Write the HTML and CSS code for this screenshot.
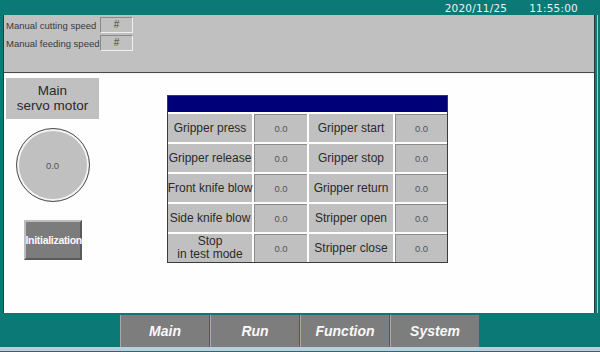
FILE: index.html
```html
<!DOCTYPE html>
<html lang="en">
<head>
  <meta charset="UTF-8">
  <title>Main servo motor</title>
  <link rel="stylesheet" href="styles.css">
</head>
<body>
  <div class="screen">
    <div class="topbar">
      <span class="date">2020/11/25</span>
      <span class="time">11:55:00</span>
    </div>

    <div class="frame">
      <div class="settings">
        <div class="setting-row">
          <span class="setting-label">Manual cutting speed</span>
          <span class="setting-box">#</span>
        </div>
        <div class="setting-row">
          <span class="setting-label">Manual feeding speed</span>
          <span class="setting-box">#</span>
        </div>
      </div>

      <div class="content">
        <div class="servo">
          <div class="servo-title">Main<br>servo motor</div>
          <div class="gauge">0.0</div>
          <button class="init-btn">Initialization</button>
        </div>

        <div class="status-table">
          <div class="status-head"></div>
          <div class="status-grid">
            <div class="cell label">Gripper press</div>
            <div class="cell value">0.0</div>
            <div class="cell label">Gripper start</div>
            <div class="cell value">0.0</div>

            <div class="cell label">Gripper release</div>
            <div class="cell value">0.0</div>
            <div class="cell label">Gripper stop</div>
            <div class="cell value">0.0</div>

            <div class="cell label">Front knife blow</div>
            <div class="cell value">0.0</div>
            <div class="cell label">Gripper return</div>
            <div class="cell value">0.0</div>

            <div class="cell label">Side knife blow</div>
            <div class="cell value">0.0</div>
            <div class="cell label">Stripper open</div>
            <div class="cell value">0.0</div>

            <div class="cell label small">Stop<br>in test mode</div>
            <div class="cell value">0.0</div>
            <div class="cell label">Stripper close</div>
            <div class="cell value">0.0</div>
          </div>
        </div>
      </div>
    </div>

    <div class="nav">
      <button class="nav-btn">Main</button>
      <button class="nav-btn">Run</button>
      <button class="nav-btn">Function</button>
      <button class="nav-btn">System</button>
    </div>

    <div class="taskbar"></div>
  </div>
</body>
</html>
```

FILE: styles.css
```css
body {
  margin: 0;
  padding: 0;
  background-color: #0b7976;
  font-family: "Liberation Sans", Arial, sans-serif;
}
.screen {
  width: 600px;
  height: 352px;
  display: flex;
  flex-direction: column;
  overflow: hidden;
}
.topbar {
  height: 15px;
  display: flex;
  justify-content: flex-end;
  align-items: center;
  gap: 22px;
  padding-right: 22px;
  color: #e8f4f2;
  font-family: "DejaVu Sans", Verdana, sans-serif;
  font-size: 10.5px;
  letter-spacing: 0.2px;
}
.frame {
  margin: 0 5px 0 3px;
  border-left: 1px solid #2a3a3a;
  border-right: 1px solid #2a3a3a;
  box-shadow: 2px 0 0 #0b7976, 3px 0 0 #9fd0cc;
  display: flex;
  flex-direction: column;
}
.settings {
  height: 58px;
  background-color: #c0c0c0;
  border-bottom: 1px solid #4a4a4a;
  padding: 1px 0 0 2px;
  box-sizing: border-box;
}
.setting-row {
  display: flex;
  align-items: center;
  height: 18px;
}
.setting-label {
  width: 94px;
  font-size: 9.5px;
  color: #3a3a3a;
  white-space: nowrap;
}
.setting-box {
  width: 31px;
  height: 14px;
  border: 1px solid;
  border-color: #8a8a8a #f0f0f0 #f0f0f0 #8a8a8a;
  font-size: 10px;
  color: #444;
  text-align: center;
  line-height: 14px;
}
.content {
  height: 240px;
  background-color: #fefefe;
  border-top: 1px solid #f4f4f4;
  display: flex;
  padding: 4px 0 0 2px;
  box-sizing: border-box;
}
.servo {
  width: 93px;
  display: flex;
  flex-direction: column;
  align-items: center;
}
.servo-title {
  width: 93px;
  height: 41px;
  background-color: #c0c0c0;
  font-size: 13.5px;
  color: #2a2a2a;
  text-align: center;
  line-height: 15px;
  padding-top: 5px;
  box-sizing: border-box;
}
.gauge {
  width: 72px;
  height: 72px;
  margin-top: 9px;
  border-radius: 50%;
  background-color: #c0c0c0;
  border: 1px solid #505050;
  box-shadow: inset 0 0 0 2px #f4f4f4;
  display: flex;
  align-items: center;
  justify-content: center;
  font-size: 9.5px;
  color: #555;
}
.init-btn {
  width: 58px;
  height: 40px;
  margin-top: 18px;
  background-color: #7c7c7c;
  border: 2px solid;
  border-color: #bdbdbd #5a5a5a #5a5a5a #bdbdbd;
  color: #fafafa;
  font-family: "Liberation Sans", Arial, sans-serif;
  font-weight: bold;
  font-size: 10.5px;
  padding: 0;
  letter-spacing: -0.3px;
}
.status-table {
  margin: 17px 0 0 68px;
  width: 279px;
  border: 1px solid #3c3c3c;
  align-self: flex-start;
}
.status-head {
  height: 16px;
  background-color: #000078;
}
.status-grid {
  display: grid;
  grid-template-columns: 84px 53px 84px 52px;
  grid-auto-rows: 28px;
  gap: 2px;
  padding-top: 2px;
  background-color: #fdfdfd;
}
.cell {
  background-color: #c0c0c0;
  display: flex;
  align-items: center;
  justify-content: center;
  text-align: center;
}
.label {
  font-size: 12px;
  color: #2a2a2a;
  white-space: nowrap;
}
.label.small {
  line-height: 13px;
}
.value {
  font-size: 9.5px;
  color: #555;
  border-top: 1px solid #8c8c8c;
  border-left: 1px solid #8c8c8c;
}
.nav {
  height: 32px;
  margin-top: 2px;
  padding-left: 120px;
  display: flex;
  gap: 1px;
}
.nav-btn {
  width: 89px;
  height: 32px;
  background-color: #7d7d7d;
  border: none;
  border-left: 1px solid #a8a8a8;
  color: #f8f8f8;
  font-family: "Liberation Sans", Arial, sans-serif;
  font-size: 14px;
  font-weight: bold;
  font-style: italic;
  padding: 0;
}
.taskbar {
  height: 4px;
  background-color: #b9cfdc;
}
```
